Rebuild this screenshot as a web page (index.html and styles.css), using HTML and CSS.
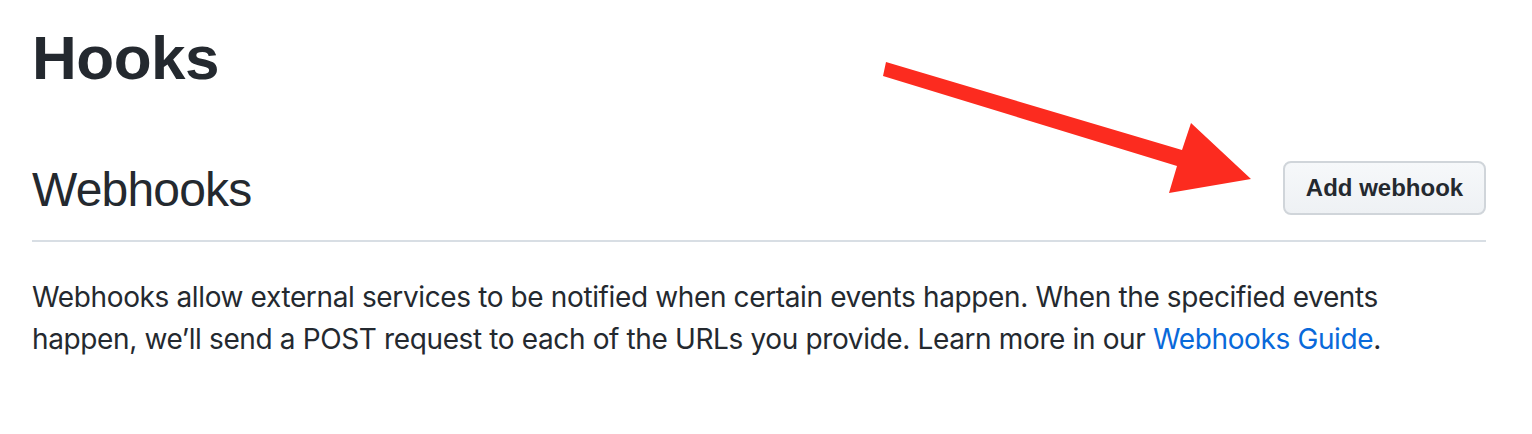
FILE: index.html
```html
<!DOCTYPE html>
<html lang="en">
<head>
<meta charset="utf-8">
<title>Hooks</title>
<link rel="stylesheet" href="styles.css">
</head>
<body>
<main class="page">
  <h1 class="page-title">Hooks</h1>
  <div class="subhead">
    <h2 class="subhead-title">Webhooks</h2>
    <button class="btn" type="button">Add webhook</button>
  </div>
  <p class="desc">Webhooks allow external services to be notified when certain events happen. When the specified events happen, we’ll send a POST request to each of the URLs you provide. Learn more in our <a class="link" href="#">Webhooks Guide</a>.</p>
  <svg class="arrow" width="1532" height="434" viewBox="0 0 1532 434" aria-hidden="true">
    <polygon points="886,62 1182,150 1191,123 1251,179 1169,193 1177,166 883,76" fill="#fc2b1f"/>
  </svg>
</main>
</body>
</html>
```
FILE: styles.css
```css
html, body {
  margin: 0;
  padding: 0;
  background: #ffffff;
}
body {
  font-family: "Liberation Sans", Arial, sans-serif;
  color: #24292f;
}
.page {
  position: relative;
  width: 1454px;
  padding: 18px 0 0 32px;
  height: 416px;
}
.page-title {
  margin: 0;
  font-size: 62px;
  line-height: 80px;
  font-weight: 700;
  letter-spacing: -0.5px;
}
.subhead {
  display: flex;
  justify-content: space-between;
  align-items: center;
  margin-top: 56px;
  padding-bottom: 14px;
  border-bottom: 2px solid #d8dee4;
}
.subhead-title {
  margin: 0;
  font-size: 48px;
  line-height: 72px;
  font-weight: 400;
  letter-spacing: -0.8px;
}
.btn {
  box-sizing: border-box;
  width: 203px;
  height: 54px;
  padding: 0;
  margin-top: -4px;
  font-family: "Liberation Sans", Arial, sans-serif;
  font-size: 24px;
  font-weight: 700;
  color: #24292f;
  background: linear-gradient(#f6f8fa, #eef1f4);
  border: 2px solid #d0d5da;
  border-radius: 8px;
}
.desc {
  margin: 34px 0 0;
  font-family: Inter, "Liberation Sans", Arial, sans-serif;
  font-size: 28px;
  line-height: 42px;
  letter-spacing: -0.37px;
}
.link {
  color: #0969da;
  text-decoration: none;
}
.arrow {
  position: absolute;
  left: 0;
  top: 0;
  pointer-events: none;
}
```
